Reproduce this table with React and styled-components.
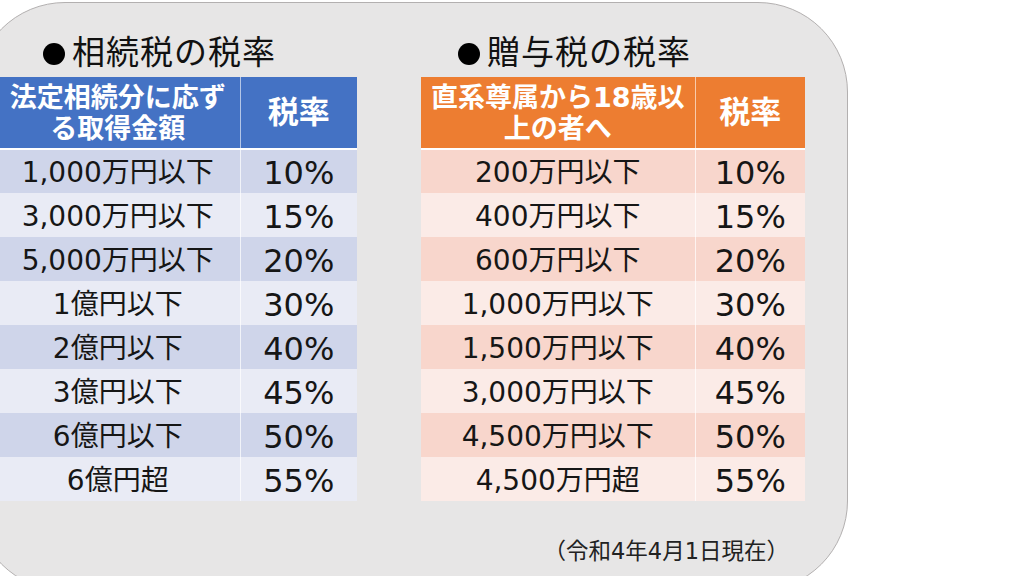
import React from 'react';
import styled, { createGlobalStyle } from 'styled-components';

const GlobalStyle = createGlobalStyle`
  html, body {
    margin: 0;
    padding: 0;
    background: #ffffff;
  }
  body {
    font-family: "DejaVu Sans", "Noto Sans CJK JP", sans-serif;
    color: #111;
  }
`;

const Slide = styled.div`
  width: 1024px;
  height: 576px;
  overflow: hidden;
  background: #ffffff;
`;

// グレーの角丸パネル（左端と下端は画面外にはみ出す）
const Panel = styled.div`
  margin-left: -25px;
  margin-top: 2px;
  width: 873px;
  height: 589px;
  box-sizing: border-box;
  background: #e7e6e6;
  border: 1px solid #b3b0b0;
  border-radius: 90px;
  display: flex;
  gap: 64px;
  padding: 27px 0 0 20px;
`;

const Section = styled.div`
  display: flex;
  flex-direction: column;
  width: ${(p) => p.width}px;
`;

const Title = styled.h2`
  margin: 0 0 7px ${(p) => p.indent}px;
  font-family: "Noto Sans CJK JP", sans-serif;
  font-weight: 400;
  font-size: 33px;
  line-height: 40px;
  letter-spacing: 1px;
  color: #111;
`;

const Dot = styled.span`
  display: inline-block;
  width: 22px;
  height: 22px;
  margin: 0 7px 0 0;
  border-radius: 50%;
  background: #000;
  vertical-align: -1px;
`;

const Table = styled.table`
  border-collapse: collapse;
  table-layout: fixed;
  width: 100%;
`;

const HeadCell = styled.th`
  height: 71px;
  padding: 0;
  background: ${(p) => p.color};
  color: #ffffff;
  font-family: "DejaVu Sans", "Noto Sans CJK JP", sans-serif;
  font-weight: 700;
  font-size: ${(p) => (p.big ? 31 : 27)}px;
  line-height: 31px;
  text-align: center;
  vertical-align: middle;
  border-bottom: 2px solid #ffffff;
  & + & {
    border-left: 1px solid rgba(255, 255, 255, 0.6);
  }
`;

const Cell = styled.td`
  height: 44px;
  padding: 3px 0 0;
  box-sizing: border-box;
  background: ${(p) => p.bg};
  font-size: ${(p) => (p.big ? 32 : 28)}px;
  line-height: 32px;
  text-align: center;
  vertical-align: middle;
  color: #161616;
  white-space: nowrap;
  & + & {
    border-left: 1px solid rgba(255, 255, 255, 0.7);
  }
`;

const Note = styled.div`
  margin-top: 37px;
  padding-right: 16px;
  text-align: right;
  font-size: 22.5px;
  line-height: 26px;
  color: #222;
`;

const inheritance = [
  ['1,000万円以下', '10%'],
  ['3,000万円以下', '15%'],
  ['5,000万円以下', '20%'],
  ['1億円以下', '30%'],
  ['2億円以下', '40%'],
  ['3億円以下', '45%'],
  ['6億円以下', '50%'],
  ['6億円超', '55%'],
];

const gift = [
  ['200万円以下', '10%'],
  ['400万円以下', '15%'],
  ['600万円以下', '20%'],
  ['1,000万円以下', '30%'],
  ['1,500万円以下', '40%'],
  ['3,000万円以下', '45%'],
  ['4,500万円以下', '50%'],
  ['4,500万円超', '55%'],
];

const blue = { head: '#4472c4', band: ['#cfd5ea', '#e9ebf5'] };
const orange = { head: '#ed7d31', band: ['#f8d6cc', '#fbebe7'] };

const RateTable = ({ theme, widths, head, rows }) => (
  <Table>
    <colgroup>
      <col style={{ width: widths[0] }} />
      <col style={{ width: widths[1] }} />
    </colgroup>
    <thead>
      <tr>
        <HeadCell color={theme.head}>{head}</HeadCell>
        <HeadCell color={theme.head} big>税率</HeadCell>
      </tr>
    </thead>
    <tbody>
      {rows.map(([amount, rate], i) => (
        <tr key={amount}>
          <Cell bg={theme.band[i % 2]}>{amount}</Cell>
          <Cell bg={theme.band[i % 2]} big>{rate}</Cell>
        </tr>
      ))}
    </tbody>
  </Table>
);

const App = () => (
  <Slide>
    <GlobalStyle />
    <Panel>
      <Section width={361}>
        <Title indent={47}><Dot />相続税の税率</Title>
        <RateTable
          theme={blue}
          widths={[244, 117]}
          head={<>法定相続分に応ず<br />る取得金額</>}
          rows={inheritance}
        />
      </Section>
      <Section width={384}>
        <Title indent={37}><Dot />贈与税の税率</Title>
        <RateTable
          theme={orange}
          widths={[274, 110]}
          head={<>直系尊属から18歳以<br />上の者へ</>}
          rows={gift}
        />
        <Note>（令和4年4月1日現在）</Note>
      </Section>
    </Panel>
  </Slide>
);

export default App;
